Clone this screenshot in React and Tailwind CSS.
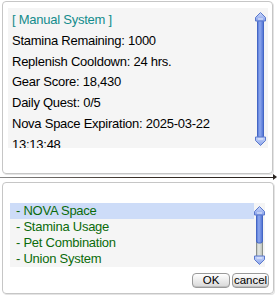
import React from "react";

function ScrollBar({ height, thumbEnd }) {
  const w = 11;
  const ah = 9;
  const barTop = ah - 1;
  const barBot = height - ah + 1;
  const tEnd = thumbEnd == null ? barBot : thumbEnd;
  return (
    <svg width={w} height={height} viewBox={`0 0 ${w} ${height}`} className="block">
      <defs>
        <linearGradient id={`bar${height}`} x1="0" x2="1" y1="0" y2="0">
          <stop offset="0" stopColor="#4f73d6" />
          <stop offset="0.4" stopColor="#8fa9ee" />
          <stop offset="1" stopColor="#4c6fd2" />
        </linearGradient>
        <linearGradient id={`trk${height}`} x1="0" x2="1" y1="0" y2="0">
          <stop offset="0" stopColor="#b9bfb9" />
          <stop offset="0.4" stopColor="#e4e8e4" />
          <stop offset="1" stopColor="#b7bdb7" />
        </linearGradient>
        <linearGradient id={`arr${height}`} x1="0" x2="0" y1="0" y2="1">
          <stop offset="0" stopColor="#c8d6fa" />
          <stop offset="1" stopColor="#8aa3ea" />
        </linearGradient>
      </defs>
      {tEnd < barBot && (
        <rect x="2.5" y={tEnd - 2} width="6" height={barBot - tEnd + 2} fill={`url(#trk${height})`} stroke="#8a908a" />
      )}
      <rect x="2.5" y={barTop} width="6" height={tEnd - barTop} rx="2" fill={`url(#bar${height})`} stroke="#4466c4" />
      <polygon points={`5.5,0.5 10.5,5.5 10.5,${ah} 0.5,${ah} 0.5,5.5`} fill={`url(#arr${height})`} stroke="#5a78cc" />
      <line x1="3" x2="8" y1={ah - 2} y2={ah - 2} stroke="#e8eefc" />
      <polygon
        points={`5.5,${height - 0.5} 10.5,${height - 5.5} 10.5,${height - ah} 0.5,${height - ah} 0.5,${height - 5.5}`}
        fill={`url(#arr${height})`}
        stroke="#5a78cc"
      />
      <line x1="3" x2="8" y1={height - ah + 2} y2={height - ah + 2} stroke="#e8eefc" />
    </svg>
  );
}

function Btn({ children, w }) {
  return (
    <div
      className={`${w} h-[15px] flex items-center justify-center rounded-[4px] border border-[#9a9a9a] bg-gradient-to-b from-[#ffffff] to-[#d8d8d8] text-[11.5px] leading-none text-black shadow-[inset_0_-1px_0_#c0c0c0]`}
    >
      {children}
    </div>
  );
}

export default function App() {
  const lines = [
    { t: "[ Manual System ]", c: "text-[#138c8c]" },
    { t: "Stamina Remaining: 1000" },
    { t: "Replenish Cooldown: 24 hrs." },
    { t: "Gear Score: 18,430" },
    { t: "Daily Quest: 0/5" },
    { t: "Nova Space Expiration: 2025-03-22" },
    { t: "13:13:48" },
  ];
  const rows = ["- NOVA Space", "- Stamina Usage", "- Pet Combination", "- Union System"];
  return (
    <div
      className="w-[277px] h-[296px] bg-white overflow-hidden pt-px"
      style={{ fontFamily: '"Liberation Sans", Arial, sans-serif' }}
    >
      {/* Top panel */}
      <div className="ml-[2px] w-[271px] h-[173px] border border-[#c6c6c6] rounded-[4px] pl-[5px] pt-[6px] shadow-[1px_1px_0_#e4e4e4]">
        <div className="w-[260px] h-[140px] bg-[#f5f5f5] flex overflow-hidden">
          <div className="flex-1 pl-[4px] pt-[2px] text-[13px] leading-[20.8px] tracking-[-0.25px] text-black whitespace-nowrap">
            {lines.map((l, i) => (
              <div key={i} className={l.c || ""}>
                {l.t}
              </div>
            ))}
          </div>
          <div className="w-[11px] mr-[2px] pt-[4px]">
            <ScrollBar height={134} />
          </div>
        </div>
      </div>

      {/* Separator */}
      <div className="mt-[2px] h-[2px] flex items-center">
        <div className="flex-1 h-[1px] bg-gradient-to-r from-[#8a8a8a] via-[#3a3028] to-[#2a2420]" />
        <div className="w-0 h-0 border-y-[3px] border-y-transparent border-l-[4px] border-l-[#2a2420]" />
      </div>

      {/* Bottom panel */}
      <div className="mt-[4px] ml-[2px] w-[272px] h-[112px] border border-[#c6c6c6] rounded-[4px] pl-[7px] pt-[20px] pr-[4px] shadow-[1px_1px_0_#e4e4e4]">
        <div className="w-[255px] h-[64px] bg-[#f5f5f5] flex">
          <div className="flex-1 text-[13px] leading-[16px] tracking-[-0.25px] text-[#0b6b0b] whitespace-nowrap">
            {rows.map((r, i) => (
              <div key={i} className={`pl-[6px] h-[16px] ${i === 0 ? "bg-[#cddcf8]" : ""}`}>
                {r}
              </div>
            ))}
          </div>
          <div className="w-[11px] pt-[3px]">
            <ScrollBar height={59} thumbEnd={37} />
          </div>
        </div>
        <div className="mt-[6px] flex justify-end gap-[2px]">
          <Btn w="w-[38px]">OK</Btn>
          <Btn w="w-[37px]">cancel</Btn>
        </div>
      </div>
    </div>
  );
}
